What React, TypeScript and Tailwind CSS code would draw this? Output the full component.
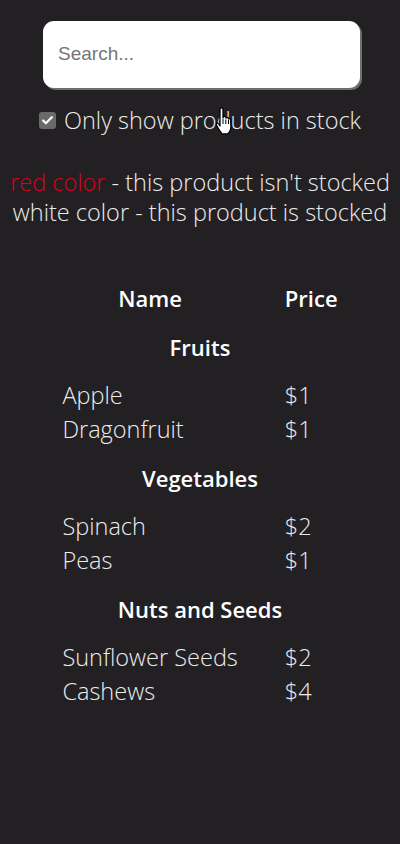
import { Check } from "lucide-react";

const categories = [
  {
    name: "Fruits",
    items: [
      { name: "Apple", price: "$1" },
      { name: "Dragonfruit", price: "$1" },
    ],
  },
  {
    name: "Vegetables",
    items: [
      { name: "Spinach", price: "$2" },
      { name: "Peas", price: "$1" },
    ],
  },
  {
    name: "Nuts and Seeds",
    items: [
      { name: "Sunflower Seeds", price: "$2" },
      { name: "Cashews", price: "$4" },
    ],
  },
];

export default function App() {
  return (
    <div className="min-h-[844px] w-[400px] bg-[#232023] text-[#ececec] font-['Open_Sans',sans-serif] flex flex-col items-center">
      {/* Search */}
      <div className="mt-[21px] ml-[3px] w-[317px] h-[67px] bg-white rounded-[11px] shadow-[2px_2px_0_#6e6e6e] flex items-center px-[15px]">
        <input
          type="text"
          placeholder="Search..."
          className="w-full bg-transparent outline-none text-[19px] font-['Liberation_Sans',Arial,sans-serif] text-gray-800 placeholder:text-[#757575]"
        />
      </div>

      {/* In stock toggle */}
      <label className="relative mt-[17px] flex items-center gap-[8px] text-[23.5px] font-light leading-[30px]">
        <span className="w-[17px] h-[17px] rounded-[3px] bg-[#6a6a6a] flex items-center justify-center">
          <Check className="w-[13px] h-[13px] text-white" strokeWidth={4} />
        </span>
        <span>Only show products in stock</span>
        {/* mouse cursor */}
        <svg className="absolute left-[175px] top-[2px]" width="20" height="28" viewBox="0 0 20 28">
          <path
            d="M6 2.5c0-1 .7-1.7 1.5-1.7S9 1.5 9 2.5v8.5l.3-1c.6-.8 2-.8 2.5.2l.2.8c.6-.8 2-.7 2.4.3l.1.6c.7-.6 2-.3 2.2.8l.2 7c0 3.5-1.6 5.8-3.3 7.2H8.2c-1.3-1.3-3.5-4.5-5-7.3-.7-1.2-1.4-2.6-.6-3.3.8-.6 1.8.2 2.4 1l1 1.6z"
            fill="white"
            stroke="black"
            strokeWidth="1.3"
            strokeLinejoin="round"
          />
          <path d="M9 12v5M11.8 12.5v4.5M14.5 13v4" stroke="black" strokeWidth="1" />
        </svg>
      </label>

      {/* Legend */}
      <div className="mt-[32px] text-[23.5px] font-light leading-[30px] text-center">
        <p>
          <span className="text-[#d8001a]">red color</span> - this product isn't stocked
        </p>
        <p>white color - this product is stocked</p>
      </div>

      {/* Product table */}
      <div className="mt-[54px] grid grid-cols-[auto_auto] gap-x-[47px] text-[22px] leading-[30px]">
        <div className="h-[34px] flex items-center justify-center font-semibold text-white">Name</div>
        <div className="h-[34px] flex items-center justify-center font-semibold text-white">Price</div>
        {categories.map((cat) => (
          <div key={cat.name} className="col-span-2 grid grid-cols-subgrid">
            <div className="col-span-2 h-[63px] flex items-center justify-center font-semibold text-white">
              {cat.name}
            </div>
            {cat.items.map((item) => (
              <div key={item.name} className="col-span-2 grid grid-cols-subgrid h-[34px] items-center text-[23.5px] font-light">
                <span>{item.name}</span>
                <span>{item.price}</span>
              </div>
            ))}
          </div>
        ))}
      </div>
    </div>
  );
}
